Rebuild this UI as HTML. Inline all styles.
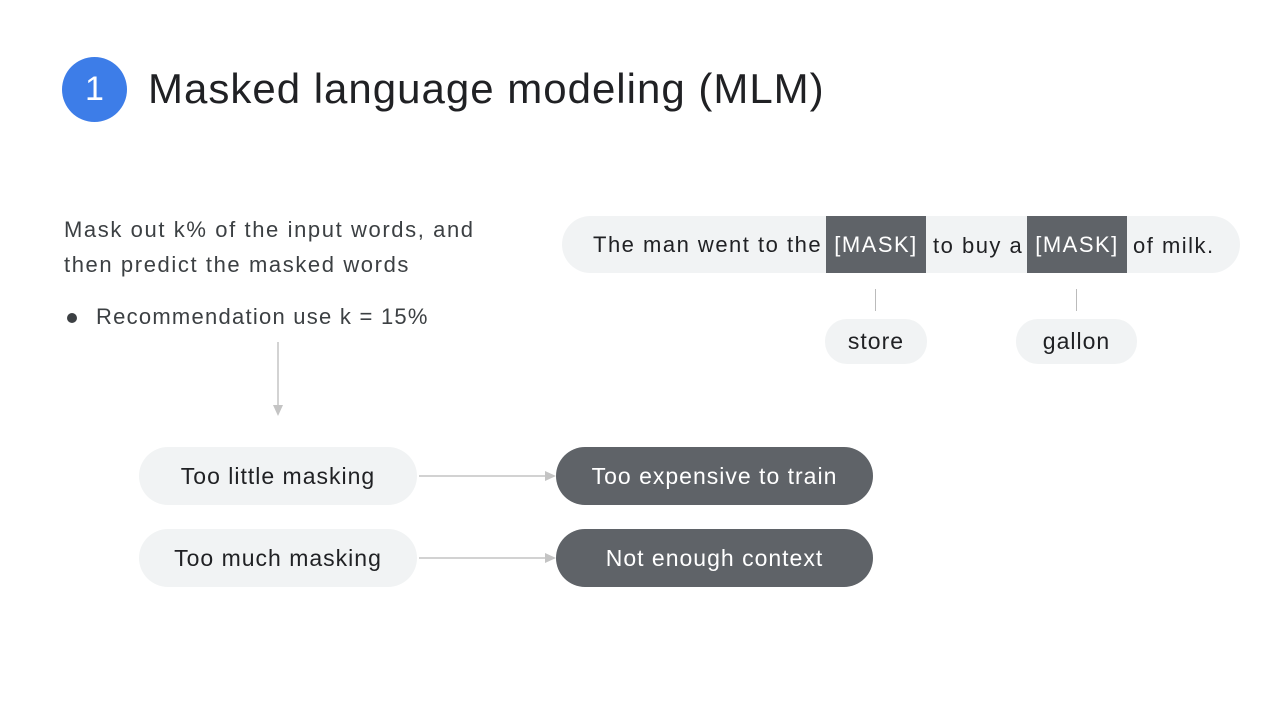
<!DOCTYPE html><html><head><style>
body{margin:0;width:1280px;height:720px;background:#fff;position:relative;overflow:hidden;font-family:"Liberation Sans",Arial,sans-serif;color:#202124}
.a{position:absolute}
.pill{position:absolute;display:flex;align-items:center;justify-content:center;font-size:23px;background:#f1f3f4;border-radius:30px;letter-spacing:1px}
.dk{background:#5f6368;color:#fff}
</style></head><body>
<div class="a" style="left:62px;top:57px;width:65px;height:65px;border-radius:50%;background:#3d7de8;color:#fff;font-size:34px;display:flex;align-items:center;justify-content:center">1</div>
<div class="a" style="left:148px;top:65px;font-size:42px;letter-spacing:1px;color:#202124">Masked language modeling (MLM)</div>
<div class="a" style="left:64px;top:212px;font-size:22px;line-height:35px;letter-spacing:1.6px;color:#3c4043">Mask out k% of the input words, and<br>then predict the masked words</div>
<div class="a" style="left:67px;top:313px;width:10px;height:10px;border-radius:50%;background:#3c4043"></div>
<div class="a" style="left:96px;top:304px;font-size:22px;letter-spacing:1.25px;color:#3c4043">Recommendation use k = 15%</div>
<div class="pill" style="left:562px;top:216px;width:678px;height:57px;justify-content:flex-start;font-size:22px;letter-spacing:1.5px">
<span style="margin-left:31px">The man went to the</span>
<span class="a dk" style="left:264px;top:0;width:100px;height:57px;display:flex;align-items:center;justify-content:center">[MASK]</span>
<span class="a" style="left:371px;top:17px">to buy a</span>
<span class="a dk" style="left:465px;top:0;width:100px;height:57px;display:flex;align-items:center;justify-content:center">[MASK]</span>
<span class="a" style="left:571px;top:17px">of milk.</span>
</div>
<div class="a" style="left:875px;top:289px;width:1px;height:22px;background:#bbb"></div>
<div class="a" style="left:1076px;top:289px;width:1px;height:22px;background:#bbb"></div>
<div class="pill" style="left:825px;top:319px;width:102px;height:45px;border-radius:22px">store</div>
<div class="pill" style="left:1016px;top:319px;width:121px;height:45px;border-radius:22px">gallon</div>
<svg class="a" style="left:0;top:0" width="1280" height="720">
<line x1="278" y1="342" x2="278" y2="406" stroke="#c4c4c4" stroke-width="1.5"/><polygon points="273,405 283,405 278,416" fill="#c4c4c4"/>
<line x1="419" y1="476" x2="546" y2="476" stroke="#c4c4c4" stroke-width="1.5"/><polygon points="545,471 545,481 556,476" fill="#c4c4c4"/>
<line x1="419" y1="558" x2="546" y2="558" stroke="#c4c4c4" stroke-width="1.5"/><polygon points="545,553 545,563 556,558" fill="#c4c4c4"/>
</svg>
<div class="pill" style="left:139px;top:447px;width:278px;height:58px">Too little masking</div>
<div class="pill" style="left:139px;top:529px;width:278px;height:58px">Too much masking</div>
<div class="pill dk" style="left:556px;top:447px;width:317px;height:58px">Too expensive to train</div>
<div class="pill dk" style="left:556px;top:529px;width:317px;height:58px">Not enough context</div>
</body></html>
